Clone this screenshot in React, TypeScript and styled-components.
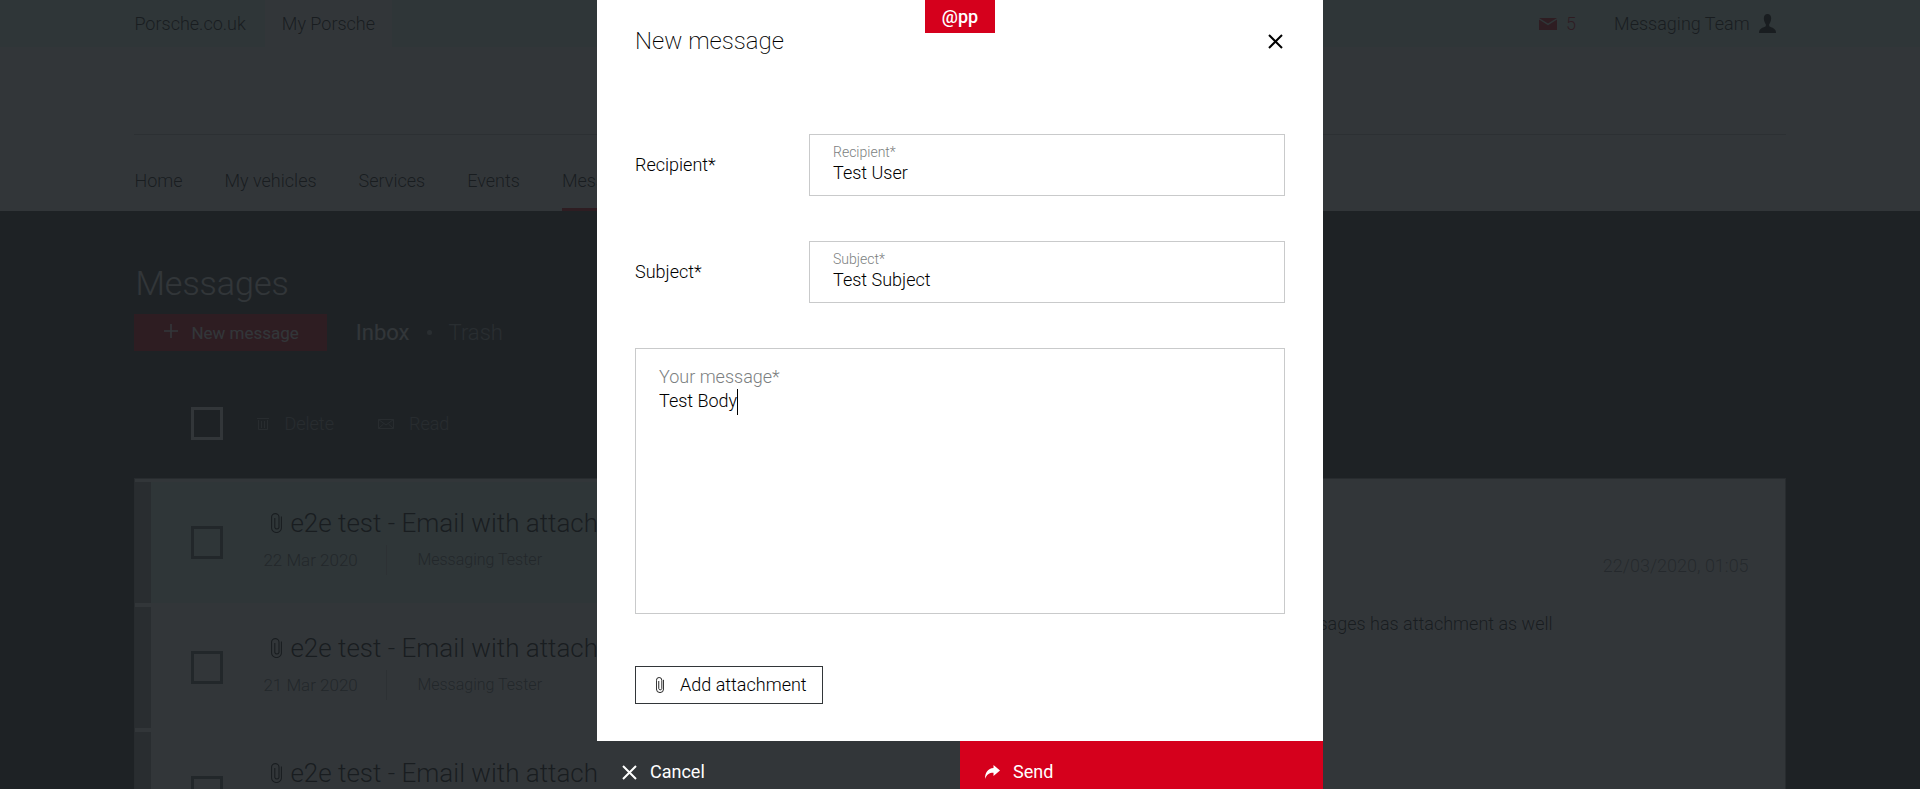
import React, { useState } from "react";
import styled, { createGlobalStyle } from "styled-components";

const RED = "#d5001c";
const MINT = "#dcfcf2";

const GlobalStyle = createGlobalStyle`
  *, *::before, *::after { box-sizing: border-box; }
  body {
    margin: 0;
    color: #000;
    background: #323639;
    font-family: Roboto, "Liberation Sans", sans-serif;
    font-size: 18px;
    font-weight: 300;
    line-height: 24px;
  }
  button, input, textarea { font: inherit; color: inherit; margin: 0; }
  a { color: inherit; text-decoration: none; }
  h1, h2, p { margin: 0; font-weight: 300; }
`;

const Page = styled.div`
  height: 100vh;
  overflow: hidden;
  background: #323639;
`;

const Header = styled.header`
  background: #fff;
`;

const TopBar = styled.div`
  display: flex;
  justify-content: space-between;
  height: 47px;
  padding: 0 7%;
  background: ${MINT};
`;

const SiteTabs = styled.nav`
  display: flex;
`;

const SiteTab = styled.a<{ $active?: boolean }>`
  display: flex;
  align-items: center;
  padding: ${(p) => (p.$active ? "0 17px" : "0 19px 0 0")};
  background: ${(p) => (p.$active ? "#fff" : "transparent")};
`;

const Account = styled.div`
  display: flex;
  align-items: center;
  gap: 38px;
  padding-right: 10px;
`;

const AccountLink = styled.a<{ $alert?: boolean }>`
  display: flex;
  align-items: center;
  gap: 9px;
  color: ${(p) => (p.$alert ? RED : "#000")};
`;

const Brand = styled.div`
  height: 88px;
  margin: 0 7%;
  border-bottom: 1px solid #c0c2c3;
`;

const MainNav = styled.nav`
  display: flex;
  gap: 42px;
  height: 76px;
  padding: 0 7%;
`;

const NavLink = styled.a<{ $active?: boolean }>`
  display: flex;
  align-items: center;
  padding-top: 18px;
  border-bottom: 3px solid ${(p) => (p.$active ? RED : "transparent")};
`;

const Main = styled.main`
  padding: 48px 7% 0;
`;

const Heading = styled.h1`
  font-size: 34px;
  line-height: 48px;
  color: #fff;
  padding: 0 0 7px 1px;
`;

const FolderBar = styled.div`
  display: flex;
  align-items: center;
  gap: 29px;
`;

const NewButton = styled.button`
  display: flex;
  align-items: center;
  gap: 12px;
  height: 37px;
  padding: 0 28px 0 29px;
  border: 0;
  background: ${RED};
  color: #fff;
  font-size: 17px;
  font-weight: 400;
`;

const Folders = styled.nav`
  display: flex;
  align-items: center;
  gap: 17px;
  font-size: 22px;
`;

const Folder = styled.a<{ $active?: boolean }>`
  color: ${(p) => (p.$active ? "#fff" : "#a6a9ab")};
  font-weight: ${(p) => (p.$active ? 400 : 300)};
`;

const Dot = styled.span`
  width: 5px;
  height: 5px;
  border-radius: 50%;
  background: #a6a9ab;
`;

const Tools = styled.div`
  display: flex;
  align-items: center;
  height: 33px;
  margin: 56px 0 38px;
  padding-left: 57px;
  color: #96999b;
`;

const Tick = styled.input<{ $light?: boolean }>`
  appearance: none;
  flex: none;
  width: 32px;
  height: 33px;
  border: 3px solid ${(p) => (p.$light ? "#fff" : "#626669")};
`;

const Tool = styled.button`
  display: flex;
  align-items: center;
  gap: 15px;
  margin-left: 34px;
  padding: 0;
  border: 0;
  background: none;
  & + & { margin-left: 44px; }
`;

const Card = styled.section`
  display: grid;
  grid-template-columns: 3fr 5fr;
  border: 1px solid #96989a;
  background: #fff;
`;

const Rows = styled.div`
  display: flex;
  flex-direction: column;
  gap: 4px;
  padding-top: 3px;
  min-width: 0;
`;

const Row = styled.article<{ $selected?: boolean }>`
  display: flex;
  height: 121px;
  border-left: 16px solid #a0a2a4;
  padding: 25px 0 0 40px;
  background: ${(p) => (p.$selected ? MINT : "#fff")};
  overflow: hidden;
`;

const RowTick = styled(Tick)`
  margin-top: 19px;
`;

const RowText = styled.div`
  padding-left: 40px;
  white-space: nowrap;
`;

const RowTitle = styled.h2`
  display: flex;
  align-items: center;
  gap: 8px;
  padding-left: 8px;
  font-size: 26px;
  line-height: 32px;
`;

const RowMeta = styled.div`
  display: flex;
  align-items: center;
  height: 32px;
  margin-top: 5px;
  font-size: 16px;
  color: #626669;
`;

const RowDate = styled.time`
  width: 123px;
  font-size: 17px;
`;

const RowSender = styled.span`
  display: flex;
  align-items: center;
  height: 30px;
  padding-left: 30px;
  border-left: 1px solid #c9cacb;
`;

const Reader = styled.div`
  display: flex;
  flex-direction: column;
  gap: 34px;
  padding: 75px 36px 0 492px;
`;

const ReaderDate = styled.time`
  align-self: flex-end;
  color: #7c7f81;
`;

const Backdrop = styled.div`
  position: fixed;
  inset: 0;
  display: flex;
  justify-content: center;
  align-items: flex-start;
  background: rgba(28, 32, 36, 0.9);
`;

const Dialog = styled.form`
  position: relative;
  width: 726px;
  max-width: 100%;
  background: #fff;
`;

const Badge = styled.span`
  position: absolute;
  top: 0;
  left: 50%;
  transform: translateX(-50%);
  width: 70px;
  height: 33px;
  background: ${RED};
  color: #fff;
  font-weight: 500;
  line-height: 34px;
  text-align: center;
`;

const DialogBody = styled.div`
  padding: 25px 38px 37px;
`;

const DialogHead = styled.div`
  display: flex;
  justify-content: space-between;
  align-items: center;
  margin-bottom: 77px;
`;

const DialogTitle = styled.h2`
  font-size: 24px;
  line-height: 32px;
  font-weight: 200;
`;

const CloseButton = styled.button`
  display: flex;
  padding: 0 2px;
  border: 0;
  background: none;
`;

const Field = styled.div`
  display: grid;
  grid-template-columns: 174px 1fr;
  align-items: center;
  margin-bottom: 45px;
`;

const InputBox = styled.div`
  display: flex;
  flex-direction: column;
  height: 62px;
  padding: 7px 23px;
  border: 1px solid #c9cacb;
`;

const Hint = styled.label<{ $large?: boolean }>`
  font-size: ${(p) => (p.$large ? 18 : 14)}px;
  line-height: ${(p) => (p.$large ? 24 : 20)}px;
  color: #7c7f81;
`;

const TextInput = styled.input`
  height: 22px;
  padding: 0;
  border: 0;
  outline: 0;
  background: none;
`;

const MessageBox = styled.div`
  display: flex;
  flex-direction: column;
  height: 266px;
  margin-bottom: 52px;
  padding: 16px 23px;
  border: 1px solid #c9cacb;
`;

const MessageLine = styled.div`
  display: flex;
  align-items: flex-start;
`;

const MessageInput = styled.textarea`
  field-sizing: content;
  resize: none;
  padding: 0;
  border: 0;
  outline: 0;
  overflow: hidden;
  background: none;
  caret-color: transparent;
`;

const Caret = styled.span`
  width: 1px;
  height: 26px;
  background: #000;
`;

const AttachButton = styled.button`
  display: flex;
  align-items: center;
  gap: 16px;
  height: 38px;
  padding: 0 15px 0 20px;
  border: 1px solid #323639;
  background: #fff;
`;

const Actions = styled.div`
  display: grid;
  grid-template-columns: 1fr 1fr;
`;

const Action = styled.button<{ $primary?: boolean }>`
  display: flex;
  align-items: center;
  gap: 13px;
  height: 62px;
  padding: 0 25px;
  border: 0;
  background: ${(p) => (p.$primary ? RED : "#323639")};
  color: #fff;
  font-weight: 400;
`;

const Cross = () => (
  <svg width="15" height="15" viewBox="0 0 15 15" fill="none" stroke="currentColor" strokeWidth="2" aria-hidden="true">
    <path d="M1 1l13 13M14 1L1 14" />
  </svg>
);

const Plus = () => (
  <svg width="16" height="20" viewBox="0 0 16 20" fill="none" stroke="currentColor" strokeWidth="1.6" aria-hidden="true">
    <path d="M8 1v14M1 8h14" />
  </svg>
);

const Clip = ({ large }: { large?: boolean }) => (
  <svg width={large ? 11 : 8} height={large ? 20 : 16} viewBox="0 0 11 20" preserveAspectRatio="none" fill="none" stroke="currentColor" strokeWidth="1.1" aria-hidden="true">
    <path d="M10.4 3.5v11.5a4.9 4.5 0 0 1-9.800 0V4.100a3.700 3.500 0 0 1 7.400 0v10.400a2.200 2.200 0 0 1-4.200 0V5" />
  </svg>
);

const Envelope = () => (
  <svg width="18" height="12" viewBox="0 0 18 12" fill="currentColor" aria-hidden="true">
    <path d="M0 0h18L9 5.6z" />
    <path d="M0 1.6v10.4h18V1.6L9 7.2z" />
  </svg>
);

const Person = () => (
  <svg width="17" height="19" viewBox="0 0 17 19" fill="currentColor" aria-hidden="true">
    <path d="M8.5 0c2.4 0 3.8 1.8 3.7 4.6-.1 2.4-1.1 4.600-2 5.600v1.700c.5 1.100 5 1.600 6.300 4.400.3.700.5 1.600.5 2.700H0c0-1.100.2-2 .5-2.700 1.300-2.800 5.800-3.300 6.300-4.400v-1.700c-.9-1-1.900-3.200-2-5.600C4.700 1.800 6.100 0 8.500 0z" />
  </svg>
);

const Bin = () => (
  <svg width="12" height="13" viewBox="0 0 12 13" fill="none" stroke="currentColor" aria-hidden="true">
    <path d="M0 1.5h12M1.5 3v9.5h9V3M4.5 4v7M7.5 4v7" />
  </svg>
);

const OpenEnvelope = () => (
  <svg width="16" height="10" viewBox="0 0 16 10" fill="none" stroke="currentColor" aria-hidden="true">
    <path d="M.5.5h15v9H.5zM.5.5L8 6l7.500-5.500M.5 9.500l5-4.500M15.500 9.500l-5-4.500" />
  </svg>
);

const Arrow = () => (
  <svg width="15" height="14" viewBox="0 0 15 14" fill="currentColor" aria-hidden="true">
    <path d="M8.500 0L15 5.500 8.500 11V7.800C4.500 7.700 1.600 9.500 0 14 0 7.500 3 3.400 8.500 3z" />
  </svg>
);

const NAV = ["Home", "My vehicles", "Services", "Events", "Messages"];
const DATES = ["22 Mar 2020", "21 Mar 2020", "20 Mar 2020"];

export default function App() {
  const [recipient, setRecipient] = useState("Test User");
  const [subject, setSubject] = useState("Test Subject");
  const [message, setMessage] = useState("Test Body");

  return (
    <>
      <GlobalStyle />
      <Page>
        <Header>
          <TopBar>
            <SiteTabs>
              <SiteTab href="#uk">Porsche.co.uk</SiteTab>
              <SiteTab href="#my" $active>My Porsche</SiteTab>
            </SiteTabs>
            <Account>
              <AccountLink href="#unread" $alert><Envelope />5</AccountLink>
              <AccountLink href="#account">Messaging Team<Person /></AccountLink>
            </Account>
          </TopBar>
          <Brand />
          <MainNav>
            {NAV.map((item) => (
              <NavLink key={item} href={"#" + item} $active={item === "Messages"}>{item}</NavLink>
            ))}
          </MainNav>
        </Header>

        <Main>
          <Heading>Messages</Heading>
          <FolderBar>
            <NewButton type="button"><Plus />New message</NewButton>
            <Folders>
              <Folder href="#inbox" $active>Inbox</Folder>
              <Dot />
              <Folder href="#trash">Trash</Folder>
            </Folders>
          </FolderBar>
          <Tools>
            <Tick type="checkbox" $light aria-label="Select all messages" />
            <Tool type="button"><Bin />Delete</Tool>
            <Tool type="button"><OpenEnvelope />Read</Tool>
          </Tools>
          <Card>
            <Rows>
              {DATES.map((date, i) => (
                <Row key={date} $selected={i === 0}>
                  <RowTick type="checkbox" aria-label={"Select message of " + date} />
                  <RowText>
                    <RowTitle><Clip large />e2e test - Email with attachment</RowTitle>
                    <RowMeta>
                      <RowDate>{date}</RowDate>
                      <RowSender>Messaging Tester</RowSender>
                    </RowMeta>
                  </RowText>
                </Row>
              ))}
            </Rows>
            <Reader>
              <ReaderDate>22/03/2020, 01:05</ReaderDate>
              <p>This messages has attachment as well</p>
            </Reader>
          </Card>
        </Main>
      </Page>

      <Backdrop>
        <Dialog role="dialog" aria-modal="true" aria-labelledby="dialog-title" onSubmit={(e) => e.preventDefault()}>
          <Badge>@pp</Badge>
          <DialogBody>
            <DialogHead>
              <DialogTitle id="dialog-title">New message</DialogTitle>
              <CloseButton type="button" aria-label="Close"><Cross /></CloseButton>
            </DialogHead>
            <Field>
              <label htmlFor="recipient">Recipient*</label>
              <InputBox>
                <Hint htmlFor="recipient">Recipient*</Hint>
                <TextInput id="recipient" value={recipient} onChange={(e) => setRecipient(e.target.value)} />
              </InputBox>
            </Field>
            <Field>
              <label htmlFor="subject">Subject*</label>
              <InputBox>
                <Hint htmlFor="subject">Subject*</Hint>
                <TextInput id="subject" value={subject} onChange={(e) => setSubject(e.target.value)} />
              </InputBox>
            </Field>
            <MessageBox>
              <Hint htmlFor="message" $large>Your message*</Hint>
              <MessageLine>
                <MessageInput id="message" rows={1} value={message} onChange={(e) => setMessage(e.target.value)} />
                <Caret />
              </MessageLine>
            </MessageBox>
            <AttachButton type="button"><Clip />Add attachment</AttachButton>
          </DialogBody>
          <Actions>
            <Action type="button"><Cross />Cancel</Action>
            <Action type="submit" $primary><Arrow />Send</Action>
          </Actions>
        </Dialog>
      </Backdrop>
    </>
  );
}
